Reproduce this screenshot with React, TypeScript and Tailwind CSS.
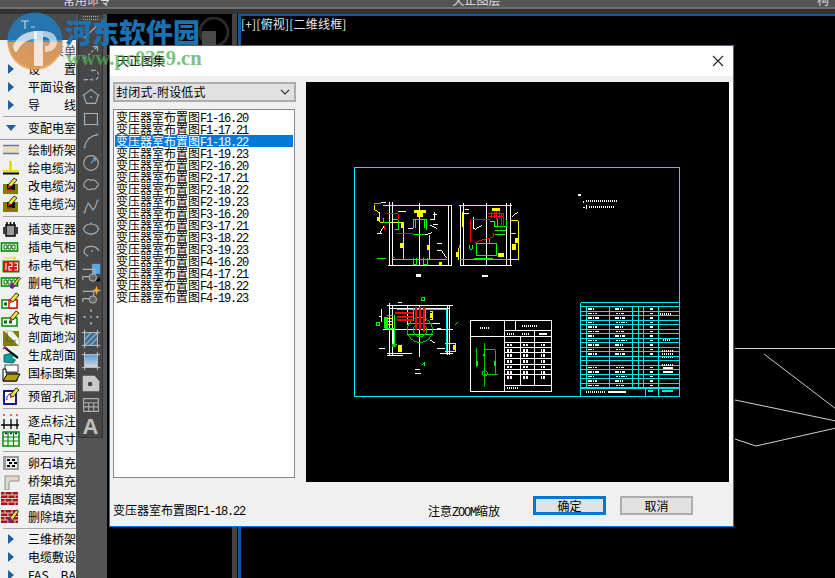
const cjk = "font-['Noto_Sans_CJK_SC',sans-serif]";

type Row = { label: string; icon?: keyof typeof menuIcons; arrow?: "right" | "down"; muted?: boolean };

const Pencil = ({ x = 9, y = 8, color = "#f2e23a" }: { x?: number; y?: number; color?: string }) => (
  <g transform={`translate(${x} ${y})`}>
    <path d="M0 7 L6 0 L9 2 L3 9 Z" fill={color} stroke="#000" strokeWidth=".8" />
    <path d="M0 7 L3 9 L0 10 Z" fill="#e22" />
  </g>
);

const Cells = ({ y = 5 }: { y?: number }) => (
  <g>
    <rect x="1.5" y={y} width="16" height="8" fill="#fff" stroke="#080" strokeWidth="1.6" />
    <path d={`M4 ${y + 2}h3v4h-3z M8 ${y + 2}h3v4h-3z M12 ${y + 2}h3v4h-3z`} fill="none" stroke="#060" strokeWidth="1" />
  </g>
);

const Brick = () => (
  <g>
    <rect x="1" y="2" width="17" height="13" fill="#a01818" />
    <path d="M1 5h17M1 8.5h17M1 12h17M5 2v3M12 2v3M8 5v3.5M15 5v3.5M5 8.5v3.5M12 8.5v3.5M8 12v3M15 12v3" stroke="#e8d8d0" strokeWidth=".9" />
  </g>
);

const menuIcons = {
  tray: (
    <g>
      <rect x="3" y="5" width="16" height="7" fill="#efdcbc" />
      <path d="M3 4.5h16M3 12.5h16" stroke="#5f7d96" strokeWidth="1.5" />
    </g>
  ),
  trench: (
    <g>
      <path d="M10.5 2v10" stroke="#d8d800" strokeWidth="2.5" />
      <path d="M3 12h16" stroke="#e6e600" strokeWidth="2" />
      <path d="M3 14.5h16" stroke="#000" strokeWidth="2" />
    </g>
  ),
  editTrench: (
    <g>
      <path d="M3 7h4v6h8v-6h3v10h-15z" fill="#808000" />
      <path d="M7 7v6h8v-6" fill="#111" />
      <path d="M7 13h5" stroke="#e22" strokeWidth="1.5" />
      <Pencil x={8} y={1} />
    </g>
  ),
  transformer: (
    <g>
      <rect x="6" y="5" width="9" height="11" fill="#999" stroke="#000" strokeWidth="1.5" />
      <path d="M7 2v3M10.5 2v3M14 2v3M4 7v7M17 7v7" stroke="#000" strokeWidth="1.5" />
    </g>
  ),
  cabinet: <Cells y={5} />,
  labelCabinet: (
    <g>
      <path d="M4 2h12M13 0.5l3 1.5l-3 1.5" stroke="#e8e000" fill="none" strokeWidth="1" />
      <rect x="3" y="5" width="16" height="11" fill="#d11" stroke="#080" strokeWidth="1" />
      <path d="M6 7v7 M9 7h3v3.5h-3v3.5h3 M14.5 7h3v7h-3 M14.5 10.5h3" stroke="#fff" fill="none" strokeWidth="1.1" />
    </g>
  ),
  delCabinet: (
    <g>
      <Cells y={4} />
      <path d="M12 11l7-8l1.5 1.5l-6 8z" fill="#e8d83a" stroke="#000" strokeWidth=".7" />
      <path d="M10 11l3-2l2 3l-2 3l-3-1z" fill="#70208a" />
    </g>
  ),
  addCabinet: (
    <g>
      <rect x="2" y="8" width="15" height="8" fill="#fff" stroke="#080" strokeWidth="1.5" />
      <rect x="9" y="8" width="8" height="8" fill="#fff" stroke="#d11" strokeWidth="1.5" />
      <path d="M4 10.5h3v3h-3z" fill="#060" />
      <Pencil x={10} y={1} />
    </g>
  ),
  editCabinet: (
    <g>
      <rect x="2" y="8" width="15" height="8" fill="#fff" stroke="#080" strokeWidth="1.5" />
      <path d="M4 10.5h3v3h-3zM9 10.5h3v3h-3z" fill="#060" />
      <Pencil x={10} y={1} />
    </g>
  ),
  section: (
    <g>
      <rect x="3" y="3" width="16" height="15" fill="#808000" />
      <path d="M4 3h8v8h7v7" fill="#fff" stroke="#9aa" strokeWidth=".6" />
      <path d="M12 3l7 8h-7z" fill="#f4f4f4" />
      <path d="M7 4v9h9" fill="none" stroke="#555" strokeWidth="1" />
    </g>
  ),
  generate: (
    <g>
      <path d="M4 9l9-2l5 4l-5 6l-9-1z" fill="#109a9a" stroke="#055" strokeWidth=".8" />
      <path d="M4 1l14 11" stroke="#000" strokeWidth="2" />
      <path d="M3 3l2-2l3 2" stroke="#c2218a" strokeWidth="1.5" fill="none" />
      <path d="M13 11l6 4" stroke="#fff" strokeWidth="1.5" />
    </g>
  ),
  folder: (
    <g>
      <rect x="5" y="1" width="13" height="7" fill="#fff" stroke="#444" strokeWidth="1" />
      <path d="M3 5h3v4h11v8h-14z" fill="#fff" stroke="#000" strokeWidth="1" />
      <path d="M3 17l4-7h13l-4 7z" fill="#b8a000" stroke="#000" strokeWidth="1" />
    </g>
  ),
  hole: (
    <g>
      <rect x="4" y="4" width="12" height="13" fill="#fff" stroke="#000080" strokeWidth="1.8" />
      <path d="M7 13c-1-4 2-6 4-6" stroke="#000080" fill="none" strokeWidth="1" />
      <Pencil x={10} y={1} />
    </g>
  ),
  pointDim: (
    <g>
      <path d="M3 3h2M10 3h2M16 3h2" stroke="#e33" strokeWidth="1.5" strokeDasharray="2 1" />
      <path d="M4 7v10M11 7v10M17 7v10M1 13h18" stroke="#000" strokeWidth="1.3" />
    </g>
  ),
  cableDim: (
    <g>
      <rect x="3" y="2" width="16" height="14" fill="#fff" stroke="#080" strokeWidth="1.5" />
      <path d="M3 7h16M3 11h16M8 2v14M13.5 2v14" stroke="#080" strokeWidth="1.2" />
      <path d="M5 3.5h2M10 3.5h2M15 3.5h2" stroke="#006" strokeWidth="1.5" />
    </g>
  ),
  gravel: (
    <g>
      <rect x="3" y="2" width="16" height="14" fill="#9a9a9a" />
      <rect x="6" y="4" width="11" height="10" fill="#eee" />
      <path d="M7 6h3M12 6h3M9 9h3M14 9h3M7 12h3M12 12h3" stroke="#000" strokeWidth="2" />
    </g>
  ),
  trayFill: (
    <g>
      <path d="M5 4h14v5h-8c-2 0-2 2-2 3v6h-4z" fill="#e5d8c0" stroke="#8a8f9a" strokeWidth="1" />
    </g>
  ),
  brick: <Brick />,
  delBrick: (
    <g>
      <Brick />
      <path d="M9 11l7-9l2.5 1.5l-6 9z" fill="#e8d83a" stroke="#000" strokeWidth=".7" />
      <path d="M8 11l3-1l2 3l-4 2z" fill="#70208a" />
    </g>
  ),
};

const rows: (Row | { sep: number; thick?: boolean })[] = [
  { sep: 2, thick: false },
  { label: "民用菜单", muted: true },
  { label: "设　　置", arrow: "right" },
  { label: "平面设备", arrow: "right" },
  { label: "导　　线", arrow: "right" },
  { sep: 5 },
  { label: "变配电室", arrow: "down" },
  { sep: 4, thick: true },
  { label: "绘制桥架", icon: "tray" },
  { label: "绘电缆沟", icon: "trench" },
  { label: "改电缆沟", icon: "editTrench" },
  { label: "连电缆沟", icon: "editTrench" },
  { sep: 7 },
  { label: "插变压器", icon: "transformer" },
  { label: "插电气柜", icon: "cabinet" },
  { label: "标电气柜", icon: "labelCabinet" },
  { label: "删电气柜", icon: "delCabinet" },
  { label: "增电气柜", icon: "addCabinet" },
  { label: "改电气柜", icon: "editCabinet" },
  { label: "剖面地沟", icon: "section" },
  { label: "生成剖面", icon: "generate" },
  { label: "国标图集", icon: "folder" },
  { sep: 5 },
  { label: "预留孔洞", icon: "hole" },
  { sep: 7 },
  { label: "逐点标注", icon: "pointDim" },
  { label: "配电尺寸", icon: "cableDim" },
  { sep: 6 },
  { label: "卵石填充", icon: "gravel" },
  { label: "桥架填充", icon: "trayFill" },
  { label: "层填图案", icon: "brick" },
  { label: "删除填充", icon: "delBrick" },
  { sep: 4 },
  { label: "三维桥架", arrow: "right" },
  { label: "电缆敷设", arrow: "right" },
  { label: "FAS　BAS", arrow: "right" },
];

const MenuRow = ({ row }: { row: Row }) => (
  <div className="flex h-[18px] shrink-0 items-center overflow-hidden">
    <div className="flex w-[28px] shrink-0 items-center">
      {row.arrow === "right" && <div className="ml-[8px] h-0 w-0 border-y-[5px] border-l-[6px] border-y-transparent border-l-[#1f5f9f]" />}
      {row.arrow === "down" && <div className="ml-[6px] h-0 w-0 border-x-[5px] border-t-[6px] border-x-transparent border-t-[#1f5f9f]" />}
      {row.icon && (
        <svg width="22" height="18" viewBox="0 0 22 18">
          {menuIcons[row.icon]}
        </svg>
      )}
    </div>
    <span className={`whitespace-nowrap text-[12px] leading-[18px] ${row.muted ? "text-[#555]" : "text-black"}`}>{row.label}</span>
  </div>
);

const stroke = { fill: "none", stroke: "#b0b0b0", strokeWidth: 1.2 };
const Dot = ({ x, y }: { x: number; y: number }) => <rect x={x - 1} y={y - 1} width="2" height="2" fill="#58a8e8" />;

const toolIcons = [
  <g key="line"><path d="M5 18L19 5" {...stroke} /><Dot x={5} y={18} /><Dot x={19} y={5} /></g>,
  <g key="ray"><path d="M5 17L19 4" {...stroke} strokeDasharray="3 2" /><path d="M14 4h5v5" {...stroke} /><Dot x={5} y={17} /></g>,
  <g key="pline"><path d="M5 16h8M13 6h4c4 1 4 9 0 10h-2" {...stroke} strokeDasharray="4 2" /><Dot x={5} y={16} /><Dot x={13} y={6} /><Dot x={13} y={16} /></g>,
  <g key="polygon"><path d="M12 3L20 9L17 18H7L4 9Z" {...stroke} /><circle cx="12" cy="11" r="1.2" fill="#58a8e8" /><Dot x={12} y={3} /><Dot x={4} y={9} /><Dot x={20} y={9} /></g>,
  <g key="rect"><path d="M5 5H19V17H5Z" {...stroke} /><Dot x={5} y={5} /><Dot x={19} y={17} /><Dot x={5} y={17} /></g>,
  <g key="arc"><path d="M5 18C6 10 12 5 19 4" {...stroke} /><Dot x={5} y={18} /><Dot x={19} y={4} /><Dot x={10} y={8} /></g>,
  <g key="circle"><circle cx="12" cy="11" r="8" {...stroke} /><path d="M12 11L17 6M14 6h3v3" fill="none" stroke="#58a8e8" strokeWidth="1.3" /></g>,
  <g key="cloud"><path d="M6 7c2-3 5-2 6-1c2-1 5-1 6 2c3 1 2 5 0 5c0 3-4 3-5 2c-2 2-6 1-6-1c-3 0-4-5-1-7z" {...stroke} /></g>,
  <g key="spline"><path d="M5 17C8 6 10 6 12 11S16 14 19 4" {...stroke} /><Dot x={5} y={17} /><Dot x={9} y={7} /><Dot x={14} y={14} /><Dot x={19} y={4} /></g>,
  <g key="ellipse"><ellipse cx="12" cy="11" rx="8" ry="5.5" {...stroke} /><Dot x={12} y={5} /><Dot x={4} y={11} /><Dot x={20} y={11} /><Dot x={12} y={17} /></g>,
  <g key="ellarc"><path d="M8 16C2 13 4 6 12 6C16 6 19 8 20 10" {...stroke} /><Dot x={8} y={16} /><Dot x={20} y={10} /><Dot x={13} y={11} /></g>,
  <g key="block">
    <path d="M13 1H22V12H13Z" fill="#58a8e8" />
    <path d="M3 7H16V15H3V19" {...stroke} />
    <circle cx="14" cy="16" r="4" fill="#666" stroke="#b9b9b9" />
    <path d="M17 20L22 15V20Z" fill="#000" />
  </g>,
  <g key="blockmake">
    <path d="M3 7H15V15H3V19" {...stroke} />
    <circle cx="14" cy="16" r="4" fill="#666" stroke="#b9b9b9" />
    <path d="M18 1l1.3 3.7l3.7 1.3l-3.7 1.3l-1.3 3.7l-1.3-3.7l-3.7-1.3l3.7-1.3z" fill="#f0b030" />
  </g>,
  <g key="points"><rect x="11" y="3" width="2" height="2" fill="#c0c0c0" /><rect x="4" y="10" width="2" height="2" fill="#c0c0c0" /><rect x="18" y="10" width="2" height="2" fill="#c0c0c0" /><rect x="11" y="17" width="2" height="2" fill="#c0c0c0" /><Dot x={12} y={11} /></g>,
  <g key="hatch">
    <rect x="5" y="4" width="14" height="14" fill="#4a6a8a" />
    <path d="M5 12L12 4M5 18L19 4M11 18L19 10" stroke="#7cc0f0" strokeWidth="1.3" />
    <path d="M2 4H22M2 18H22M5 1V21M19 1V21" stroke="#c8c8c8" strokeWidth="1" />
  </g>,
  <g key="gradient">
    <defs>
      <linearGradient id="grad" x1="0" x2="0" y1="0" y2="1">
        <stop offset="0" stopColor="#4f9fe0" />
        <stop offset="1" stopColor="#d8d8d8" />
      </linearGradient>
    </defs>
    <rect x="5" y="4" width="14" height="14" fill="url(#grad)" />
    <path d="M2 4H22M2 18H22M5 1V21M19 1V21" stroke="#c8c8c8" strokeWidth="1" />
  </g>,
  <g key="region"><path d="M3 3H16L21 9V20H3Z" fill="#c9c9c9" /><circle cx="11" cy="12" r="2.5" fill="#444" /></g>,
  <g key="table"><path d="M4 4H20V18H4ZM4 8.5H20M4 13H20M9.5 8.5V18M15 8.5V18" {...stroke} /></g>,
];

// coordinates below are 3x the screen, so each group is scaled by a third
const elevation = {
  yellow: "M115 137H322M90 135V150L105 160V187H175V300M255 225V300M342 137H500M352 155V200M340 265V300M495 182H520V300H490M495 220H512",
  white: "M135 127V318M142 127V318M310 135V318M320 135V318M130 317H320M223 130V318M347 135V318M356 130V318M485 130V318M498 130V318M345 317H500M425 130V318M105 220L118 195M95 222H112M108 128H122M160 155H182M190 205H205M270 155V180H255M255 195L275 205M260 218L240 225M275 250H290M275 272H290L305 295M385 172V205H390M390 208L412 195M360 150H373M358 162H372M500 170L520 155M265 165H275M265 195H278",
  green: "M88 132H108M115 175V188H135M145 180H160V210H150M205 205V180H245V210M212 180V205M238 180V205M205 225H240M145 300H305M97 297H122M140 292H148M205 295V315H215V295M235 295V315H247V295M395 250H455V288H395ZM388 295H445M345 300H490M375 255V268H382V255M450 182V200H485V180M458 178V198M470 178V198M450 212H482M450 225H480M435 235V250M345 255V265",
  red: "M125 162H160V178M155 220H205M118 195V210M435 180H378V245M410 240L390 248M430 160H475V200M430 170H475M440 155V175M448 150V175M455 150V180M463 150V178M470 160V200M445 220V232L412 240",
};

const elevationBlobs = [
  [165, 248, 10, 16], [247, 255, 8, 16], [208, 150, 35, 8], [215, 160, 20, 12], [282, 305, 10, 12], [97, 170, 7, 12],
  [333, 275, 7, 15], [500, 252, 12, 18], [460, 278, 18, 12], [510, 235, 8, 15], [440, 143, 25, 10], [168, 190, 8, 14],
];

const plan = {
  white: "M112 62H310M118 70H300M120 55V210M128 60V210M300 60V210M292 60V210M112 205H185M270 205H310M112 212H160M208 60V215M100 135H310M88 95H95V100M95 72V110M88 190H105M262 190H285M145 52H155M240 165L255 175M240 115H270M260 130H272M196 265H214M196 255H210",
  red: "M135 85H190M140 95H190M140 105H190M198 65V135M210 65V135M222 65V140",
  green: "M105 95V130H135V90M110 92H130M135 130V185M172 115H248M172 150H248M125 180H140M215 38H225V48H215ZM80 112H90V122H80ZM315 120L325 112M215 240L225 230V242M190 70V108M228 70V108",
  yellow: "M110 100H130M110 110H130M110 120H130M172 60V120M240 80H248V105H240M285 175H318V200H285M145 182H155V200H145M130 130V180",
};

const tableRows = [172, 189, 204, 221, 238, 254, 270, 302];
const bomRows = Array.from({ length: 19 }, (_, i) => 65 + i * 13.5);
const bomCols = [710, 778, 848, 865, 880, 925];

const Drawing = () => (
  <svg width="423" height="400" viewBox="306 82 423 400" shapeRendering="crispEdges" className="block">
    <path d="M354.5 167.5H679.5V396.5H354.5Z" fill="none" stroke="#00e8e8" />
    <g fill="none" strokeWidth="3" transform="translate(345 160) scale(.3333)">
      <path d={elevation.yellow} stroke="#ffff00" />
      <path d={elevation.white} stroke="#fff" />
      <path d={elevation.green} stroke="#00ff00" />
      <path d={elevation.red} stroke="#ff0000" />
      {elevationBlobs.map(([x, y, w, h]) => (
        <rect key={`${x}-${y}`} x={x} y={y} width={w} height={h} fill="#ffff00" />
      ))}
      <path d="M213 343H227V352H213ZM410 345H430V352H410Z" fill="#fff" />
      <path d="M435 185H448" stroke="#00e8e8" />
    </g>
    <g fill="none" strokeWidth="3" transform="translate(350 285) scale(.3333)">
      <path d={plan.white} stroke="#fff" />
      <path d="M140 75H290V205" stroke="#00e8e8" />
      <path d={plan.green} stroke="#00ff00" />
      <circle cx="210" cy="135" r="38" stroke="#00c800" />
      <circle cx="210" cy="135" r="20" stroke="#00c800" />
      <path d={plan.yellow} stroke="#ffff00" />
      <path d={plan.red} stroke="#ff0000" strokeWidth="6" />
      <rect x="145" y="182" width="10" height="18" fill="#ffff00" />
      <rect x="310" y="180" width="8" height="14" fill="#ffff00" />
      <rect x="240" y="85" width="8" height="14" fill="#ffff00" />
      <rect x="126" y="177" width="12" height="9" fill="#00c800" />
      <rect x="105" y="96" width="8" height="32" fill="#00ff00" />
      <path d="M361 106H605V320H361ZM361 154H463M463 106V320M498 106V138M463 138H605M463 155H605M553 138V302M512 155V302" stroke="#fff" />
      {tableRows.map((y) => (
        <path key={y} d={`M463 ${y}H605`} stroke="#fff" />
      ))}
      <path d="M390 128H420M515 124H565M470 148H495M515 148H540M568 148H590M470 310H505" stroke="#fff" strokeWidth="6" strokeDasharray="4 2" />
      {tableRows.slice(0, -1).map((y) => (
        <path key={y} d={`M472 ${y + 8}H490M520 ${y + 8}H534M572 ${y + 8}H584`} stroke="#fff" strokeWidth="8" strokeDasharray="5 3" />
      ))}
      <path d="M403 175V305M403 195H436V270M403 270H445M380 190V245" stroke="#00c800" />
      <circle cx="404" cy="265" r="8" stroke="#00c800" />
      <path d="M380 228V244M436 228V242M403 208V214" stroke="#00ff00" strokeWidth="6" />
      <path d="M692 53H988V334H692Z" stroke="#00e8e8" />
      {bomRows.map((y) => (
        <path key={y} d={`M692 ${y}H988`} stroke="#00e8e8" />
      ))}
      {bomCols.map((x) => (
        <path key={x} d={`M${x} 65V310`} stroke="#00e8e8" />
      ))}
      <path d="M692 310H988M888 310V334M925 310V334" stroke="#00e8e8" />
      {bomRows.slice(0, -1).map((y, i) => (
        <path
          key={y}
          d={`M714 ${y + 7}H${735 + (i % 3) * 6}M${795 + (i % 2) * 4} ${y + 7}H${818 + (i % 4) * 4}M900 ${y + 7}H908`}
          stroke="#fff"
          strokeDasharray="5 2"
          strokeWidth="5"
          opacity={i > 10 && i < 13 ? 0 : 1}
        />
      ))}
      <path d="M935 198H968M935 208H968M935 218H968M935 240H972M940 250H970M940 262H970M938 165H962M930 88H962M708 322H765M775 322H828" stroke="#fff" strokeWidth="5" strokeDasharray="4 2" />
      <path d="M895 318H908M935 318H970" stroke="#00e8e8" strokeWidth="6" />
    </g>
    <g fill="none" strokeWidth="3" transform="translate(520 160) scale(.3333)">
      <path d="M175 103H181V108H175ZM190 122V130M188 144H194M199 136V147" stroke="#fff" />
      <path d="M198 124H290M207 140H285" stroke="#fff" strokeWidth="6" strokeDasharray="4 2" />
    </g>
  </svg>
);

const parts = ["F1-16.20", "F1-17.21", "F1-18.22", "F1-19.23", "F2-16.20", "F2-17.21", "F2-18.22", "F2-19.23", "F3-16.20", "F3-17.21", "F3-18.22", "F3-19.23", "F4-16.20", "F4-17.21", "F4-18.22", "F4-19.23"];

const Code = ({ children }: { children: string }) => <span className="font-['Liberation_Mono',monospace] tracking-[-1.2px]">{children}</span>;

const Dialog = () => (
  <div className={`absolute left-[109px] top-[45px] flex h-[482px] w-[625px] flex-col border border-[#0078d7] bg-[#f0f0f0] text-[12px] text-black ${cjk}`}>
    <div className="flex h-[30px] shrink-0 items-center justify-between bg-white pl-[7px] pr-[9px]">
      <span className="leading-[30px]">天正图集</span>
      <svg width="12" height="12" viewBox="0 0 12 12">
        <path d="M1 1L11 11M11 1L1 11" stroke="#222" strokeWidth="1.1" fill="none" />
      </svg>
    </div>
    <div className="flex min-h-0 flex-1 pl-[3px] pt-[6px]">
      <div className="flex w-[193px] shrink-0 flex-col">
        <div className="flex h-[20px] w-[183px] items-center justify-between border-2 border-[#adadad] bg-[#e1e1e1] pl-px pr-[4px]">
          <span className="whitespace-nowrap leading-[16px] tracking-[.2px]">封闭式-附设低式</span>
          <svg width="10" height="6" viewBox="0 0 10 6">
            <path d="M1 1L5 5L9 1" stroke="#333" strokeWidth="1.1" fill="none" />
          </svg>
        </div>
        <div className="mt-[7px] h-[369px] w-[182px] border border-[#828790] bg-white p-px">
          {parts.map((code) => (
            <div key={code} className={`h-[12px] whitespace-nowrap pl-px leading-[12px] ${code === "F1-18.22" ? "bg-[#0078d7] text-white" : ""}`}>
              变压器室布置图<Code>{code}</Code>
            </div>
          ))}
        </div>
      </div>
      <div className="flex h-[400px] flex-1 bg-white">
        <div className="h-[400px] w-[423px] shrink-0 bg-black">
          <Drawing />
        </div>
      </div>
    </div>
    <div className="relative flex h-[44px] shrink-0 items-start pl-[3px]">
      <span className="mt-[21px] w-[315px] whitespace-nowrap leading-[14px]">
        变压器室布置图<Code>F1-18.22</Code>
      </span>
      <span className="mt-[22px] w-[105px] whitespace-nowrap leading-[14px]">
        注意<Code>ZOOM</Code>缩放
      </span>
      <div className="mt-[14px] flex h-[19px] w-[73px] items-center justify-center border-[3px] border-[#0078d7] bg-[#e1e1e1]">确定</div>
      <div className="ml-[14px] mt-[14px] flex h-[19px] w-[73px] items-center justify-center border-2 border-[#adadad] bg-[#e1e1e1]">取消</div>
    </div>
  </div>
);

const Watermark = () => (
  <div className="pointer-events-none absolute left-[7px] top-[12px] flex">
    <svg width="56" height="58" viewBox="0 0 56 58">
      <ellipse cx="28" cy="28" rx="27.5" ry="27.5" fill="#1f7fc4" opacity=".82" />
      <path d="M0.5 30H55.5C55 46 43 58 28 58C13 58 1 46 0.5 30Z" fill="#f29a4a" opacity=".85" />
      <path d="M6 34C10 24 20 19 30 19V27C22 27 15 30 11 38C9 42 7 40 6 34Z" fill="#fff" opacity=".7" />
      <path d="M27 19H36V54H27Z" fill="#fff" opacity=".75" />
      <path d="M36 19C46 19 50 24 50 30C50 36 45 40 38 40V34C41 34 43 33 43 30C43 27 41 25 36 25Z" fill="#fff" opacity=".6" />
      <path d="M18 9V17M14 9H22M24 15H28" stroke="#fff" strokeWidth="1.2" opacity=".7" />
    </svg>
    <div className="ml-[2px] flex flex-col">
      <span className={`mt-[4px] h-[32px] whitespace-nowrap text-[27px] font-black leading-[32px] text-[#1c72b0] ${cjk}`}>河东软件园</span>
      <span className="ml-[1px] whitespace-nowrap font-['Liberation_Serif',serif] text-[20.5px] font-bold leading-[20px] text-[#4fae55] opacity-75">www.pc0359.cn</span>
    </div>
  </div>
);

export default function App() {
  return (
    <div className={`relative flex h-[578px] w-[835px] flex-col overflow-hidden bg-black ${cjk}`}>
      <div className="flex h-[14px] shrink-0 flex-col bg-[#333]">
        <div className="flex h-[7px] overflow-hidden bg-[#545454] text-[12px] leading-[14px] text-[#ddd]">
          <div className="w-[174px] -translate-y-[7px] text-center">常用命令</div>
          <div className="w-[603px] -translate-y-[7px] border-l-2 border-[#3a3a3a] text-center">天正图层</div>
          <div className="flex-1 -translate-y-[7px] border-l-2 border-[#3a3a3a] pl-[38px]">构</div>
        </div>
        <div className="h-[2px] bg-[#6e6e6e]" />
      </div>
      <div className="flex min-h-0 flex-1">
        <div className="flex w-[76px] shrink-0 flex-col bg-[#4a4a4a]">
          <div className="h-[26px] shrink-0" />
          {rows.map((row, i) =>
            "sep" in row ? (
              <div key={i} style={{ height: row.sep }} className="flex shrink-0 items-center bg-[#f0f0f0]">
                {i > 0 && <div className={row.thick ? "h-px w-full bg-[#999]" : "ml-[3px] h-px w-[73px] bg-[#a8a8a8]"} />}
              </div>
            ) : (
              <div key={i} className="bg-[#f0f0f0]">
                <MenuRow row={row} />
              </div>
            )
          )}
        </div>
        <div className="w-[31px] shrink-0 bg-[#555] pl-[2px]">
          <div className="h-[424px] w-[25px] border border-[#333] bg-[#474747]">
            <div className="mx-auto mt-px h-[4px] w-[15px] border-y border-dotted border-[#aaa]" />
            {toolIcons.map((icon, i) => (
              <div key={i} className="flex h-[22px] items-center justify-center">
                <svg width="22" height="22" viewBox="0 0 24 22">
                  {icon}
                </svg>
              </div>
            ))}
            <div className="flex h-[22px] items-center justify-center font-['Liberation_Sans',sans-serif] text-[22px] font-bold leading-[22px] text-[#c0c0c0]">A</div>
          </div>
        </div>
        <div className="relative w-[125px] shrink-0 bg-black">
          <svg width="30" height="30" viewBox="0 0 30 30" className="absolute left-[92px] top-[3px]">
            <circle cx="15" cy="15" r="14" fill="none" stroke="#2a2a2a" strokeWidth="3" />
            <rect x="3" y="14" width="14" height="14" fill="#4a4a4a" />
          </svg>
        </div>
        <div className="w-[5px] shrink-0 bg-[#454545]" />
        <div className="relative min-w-0 flex-1 pl-px">
          <div className="relative h-full border-l-[3px] border-t-2 border-[#0b5cad] bg-black pt-[1px]">
            <span className="block text-[12px] leading-[14px] tracking-[.2px] text-[#e8e8e8]">
              [+][俯视][二维线框]
            </span>
            <svg width="598" height="564" viewBox="237 14 598 564" className="absolute left-[-3px] top-[-2px]" fill="none" stroke="#cfcfcf">
              <path d="M734 348.5H835M763 354L835 409M734 400L835 421M734 439L755 446L835 428" />
            </svg>
          </div>
        </div>
      </div>
      <Dialog />
      <Watermark />
    </div>
  );
}
